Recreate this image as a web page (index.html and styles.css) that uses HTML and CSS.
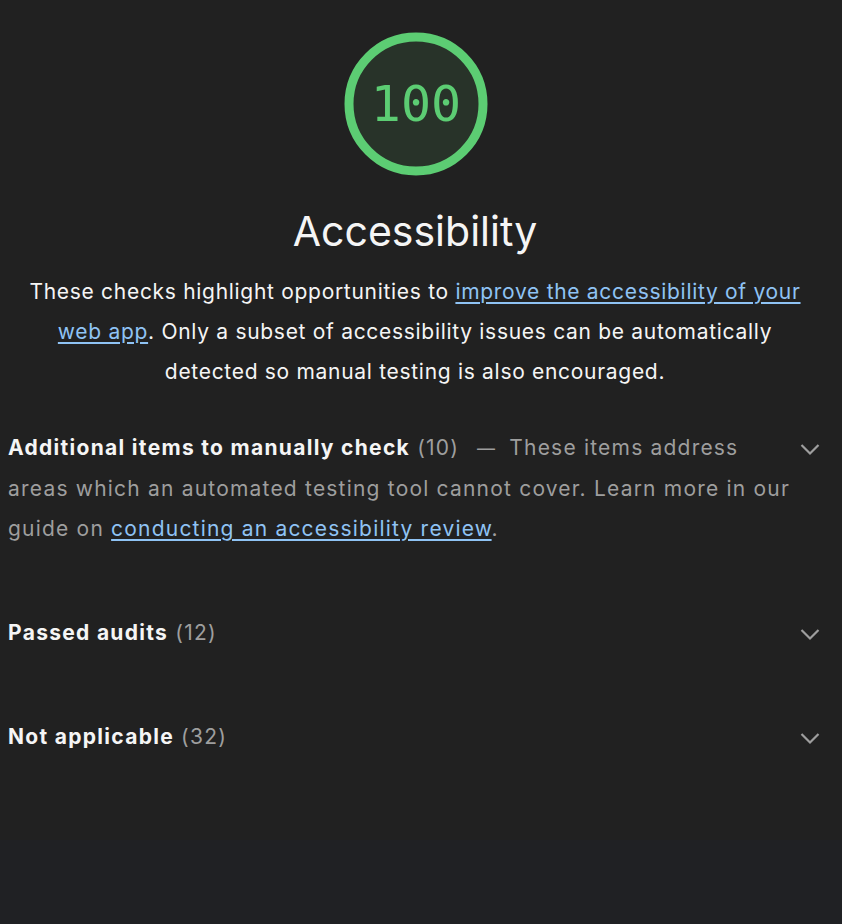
FILE: index.html
```html
<!DOCTYPE html>
<html lang="en">
<head>
<meta charset="utf-8">
<title>Accessibility</title>
<link rel="stylesheet" href="styles.css">
</head>
<body>
<div class="page">
  <section class="category">
    <div class="gauge">
      <svg class="gauge-svg" width="144" height="144" viewBox="0 0 144 144">
        <circle class="gauge-base" cx="72" cy="72" r="67"></circle>
        <circle class="gauge-arc" cx="72" cy="72" r="67"></circle>
      </svg>
      <span class="gauge-score">100</span>
    </div>
    <h1 class="title">Accessibility</h1>
    <p class="desc">These checks highlight opportunities to <a href="#">improve the accessibility of your web app</a>. Only a subset of accessibility issues can be automatically detected so manual testing is also encouraged.</p>

    <div class="group group-first">
      <div class="group-text"><span class="group-title">Additional items to manually check</span> <span class="count">(10)</span><span class="dash">—</span><span class="group-desc">These items address areas which an automated testing tool cannot cover. Learn more in our guide on <a href="#">conducting an accessibility review</a>.</span></div>
      <svg class="chev" width="24" height="24" viewBox="0 0 24 24"><path d="M3.5 7l8.5 8.5 8.5-8.5"></path></svg>
    </div>

    <div class="group">
      <div class="group-text"><span class="group-title">Passed audits</span> <span class="count">(12)</span></div>
      <svg class="chev" width="24" height="24" viewBox="0 0 24 24"><path d="M3.5 7l8.5 8.5 8.5-8.5"></path></svg>
    </div>

    <div class="group">
      <div class="group-text"><span class="group-title">Not applicable</span> <span class="count">(32)</span></div>
      <svg class="chev" width="24" height="24" viewBox="0 0 24 24"><path d="M3.5 7l8.5 8.5 8.5-8.5"></path></svg>
    </div>
  </section>
  <div class="footer-area"></div>
</div>
</body>
</html>
```
FILE: styles.css
```css
html, body {
  margin: 0;
  padding: 0;
  background: #212121;
}
body {
  font-family: Inter, "Liberation Sans", Arial, sans-serif;
  color: #f2f2f2;
}
.page {
  display: flex;
  flex-direction: column;
  min-height: 924px;
}
.category {
  height: 840px;
  box-sizing: border-box;
  padding: 32px 20px 0 8px;
}
.footer-area {
  flex: 1;
  background: #202124;
}
.gauge {
  position: relative;
  width: 144px;
  height: 144px;
  margin: 0 auto;
  left: 1px;
}
.gauge-svg {
  display: block;
}
.gauge-base {
  fill: #283329;
  stroke: none;
}
.gauge-arc {
  fill: none;
  stroke: #5ccd73;
  stroke-width: 9;
}
.gauge-score {
  position: absolute;
  inset: 0;
  display: flex;
  align-items: center;
  justify-content: center;
  font-family: "DejaVu Sans Mono", "Liberation Mono", monospace;
  font-size: 50px;
  color: #5ccd73;
}
.title {
  margin: 29px 0 0 0;
  text-align: center;
  font-weight: normal;
  font-size: 41px;
  line-height: 52px;
  color: #f5f5f5;
}
.desc {
  margin: 15px 0 0 0;
  padding: 0 10px;
  text-align: center;
  font-size: 21px;
  line-height: 40px;
  letter-spacing: 0.7px;
  color: #f5f5f5;
}
a {
  color: #8fc3f4;
  text-decoration: underline;
  text-underline-offset: 3px;
}
.group {
  display: flex;
  align-items: flex-start;
  gap: 5px;
  margin-top: 64px;
}
.group-first {
  margin-top: 36px;
}
.group-text {
  flex: 1;
  font-size: 21px;
  line-height: 40px;
  letter-spacing: 1.2px;
}
.group-title {
  font-weight: 700;
  color: #f5f5f5;
  letter-spacing: 1.3px;
}
.count {
  color: #9e9e9e;
}
.dash {
  color: #9e9e9e;
  font-size: 18px;
  margin: 0 13px 0 18px;
}
.group-desc {
  color: #9e9e9e;
}
.chev {
  flex: none;
  margin-top: 10px;
}
.chev path {
  fill: none;
  stroke: #9e9e9e;
  stroke-width: 2.2;
}
```
